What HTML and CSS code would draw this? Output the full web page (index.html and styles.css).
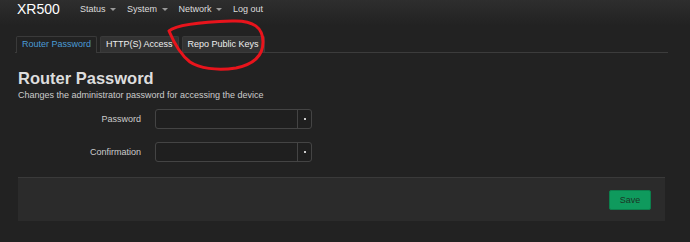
FILE: index.html
```html
<!DOCTYPE html>
<html lang="en">
<head>
    <meta charset="UTF-8">
    <meta name="viewport" content="width=device-width, initial-scale=1.0">
    <title>XR500 - Router Password</title>
    <link rel="stylesheet" href="styles.css">
</head>
<body>
    <header class="navbar">
        <span class="brand">XR500</span>
        <nav class="menu">
            <span class="menu-item">Status <span class="caret"></span></span>
            <span class="menu-item">System <span class="caret"></span></span>
            <span class="menu-item">Network <span class="caret"></span></span>
            <span class="menu-item">Log out</span>
        </nav>
    </header>

    <div class="content">
        <ul class="tabs">
            <li class="tab active">Router Password</li>
            <li class="tab">HTTP(S) Access</li>
            <li class="tab">Repo Public Keys</li>
        </ul>

        <div class="section">
            <h2>Router Password</h2>
            <p class="desc">Changes the administrator password for accessing the device</p>

            <div class="field">
                <label for="pw1">Password</label>
                <div class="input-group">
                    <input type="password" id="pw1">
                    <span class="addon"><span class="dot"></span></span>
                </div>
            </div>
            <div class="field">
                <label for="pw2">Confirmation</label>
                <div class="input-group">
                    <input type="password" id="pw2">
                    <span class="addon"><span class="dot"></span></span>
                </div>
            </div>
        </div>

        <div class="actions">
            <button class="save-btn">Save</button>
        </div>
    </div>

    <!-- hand-drawn highlight around the third tab -->
    <svg class="scribble" width="690" height="242" viewBox="0 0 690 242">
        <path d="M169,31 C176,25 200,22 232,21 C254,20 263,28 263,42 C263,55 255,64 236,68 C216,71 199,68 190,62 C181,55 174,43 169,31" />
    </svg>
</body>
</html>
```

FILE: styles.css
```css
body {
    font-family: "Liberation Sans", Arial, sans-serif;
    margin: 0;
    background-color: #222;
    color: #ccc;
    font-size: 9px;
    position: relative;
    height: 242px;
    overflow: hidden;
}
.navbar {
    height: 25px;
    display: flex;
    align-items: center;
    padding-left: 17px;
    background: linear-gradient(#2e2e2e, #222);
}
.brand {
    font-size: 14px;
    color: #fff;
    width: 63px;
    margin-top: -7px;
}
.menu {
    display: flex;
    gap: 11px;
    margin-top: -8px;
}
.menu-item {
    color: #ddd;
    font-size: 9px;
}
.caret {
    display: inline-block;
    width: 0;
    height: 0;
    border-left: 3px solid transparent;
    border-right: 3px solid transparent;
    border-top: 3px solid #999;
    vertical-align: middle;
    margin-left: 2px;
}
.content {
    margin: 0 22px 0 15px;
}
.tabs {
    list-style: none;
    margin: 11px 0 0 0;
    padding: 0 0 0 1px;
    display: flex;
    gap: 3px;
    border-bottom: 1px solid #3c3c3c;
}
.tab {
    height: 15px;
    line-height: 15px;
    padding: 0 5px;
    background-color: #333;
    border: 1px solid #3a3a3a;
    border-bottom: none;
    border-radius: 2px 2px 0 0;
    color: #eee;
}
.tab.active {
    background-color: #222;
    color: #4a9bd6;
    margin-bottom: -1px;
    height: 16px;
}
.section {
    padding-left: 3px;
}
h2 {
    font-size: 16.5px;
    font-weight: bold;
    color: #ddd;
    margin: 15px 0 0 0;
    line-height: 20px;
}
.desc {
    margin: 1px 0 0 0;
    line-height: 12px;
    color: #ccc;
}
.field {
    display: flex;
    align-items: center;
    margin-top: 8px;
    gap: 14px;
}
.field + .field {
    margin-top: 13px;
}
.field label {
    width: 123px;
    text-align: right;
    color: #ccc;
}
.input-group {
    display: flex;
    width: 157px;
    height: 20px;
    box-sizing: border-box;
    border: 1px solid #444;
    border-radius: 3px;
    background-color: #1f1f1f;
}
.input-group input {
    flex: 1;
    min-width: 0;
    border: none;
    background: transparent;
    outline: none;
    padding: 0 4px;
}
.addon {
    width: 13px;
    border-left: 1px solid #444;
    display: flex;
    align-items: center;
    justify-content: center;
}
.dot {
    width: 2px;
    height: 2px;
    background-color: #ccc;
}
.actions {
    margin: 15px 3px 0 3px;
    height: 44px;
    box-sizing: border-box;
    background-color: #2b2b2b;
    border-top: 1px solid #3a3a3a;
    display: flex;
    align-items: center;
    justify-content: flex-end;
    padding-right: 14px;
}
.save-btn {
    width: 42px;
    height: 20px;
    font-family: inherit;
    font-size: 9px;
    color: #1b3526;
    background-color: #0f9a5d;
    border: 1px solid #0c7f4c;
    border-radius: 2px;
    cursor: pointer;
    padding: 0;
}
.scribble {
    position: absolute;
    left: 0;
    top: 0;
    pointer-events: none;
}
.scribble path {
    fill: none;
    stroke: #e8141c;
    stroke-width: 3;
    stroke-linecap: round;
}
```
